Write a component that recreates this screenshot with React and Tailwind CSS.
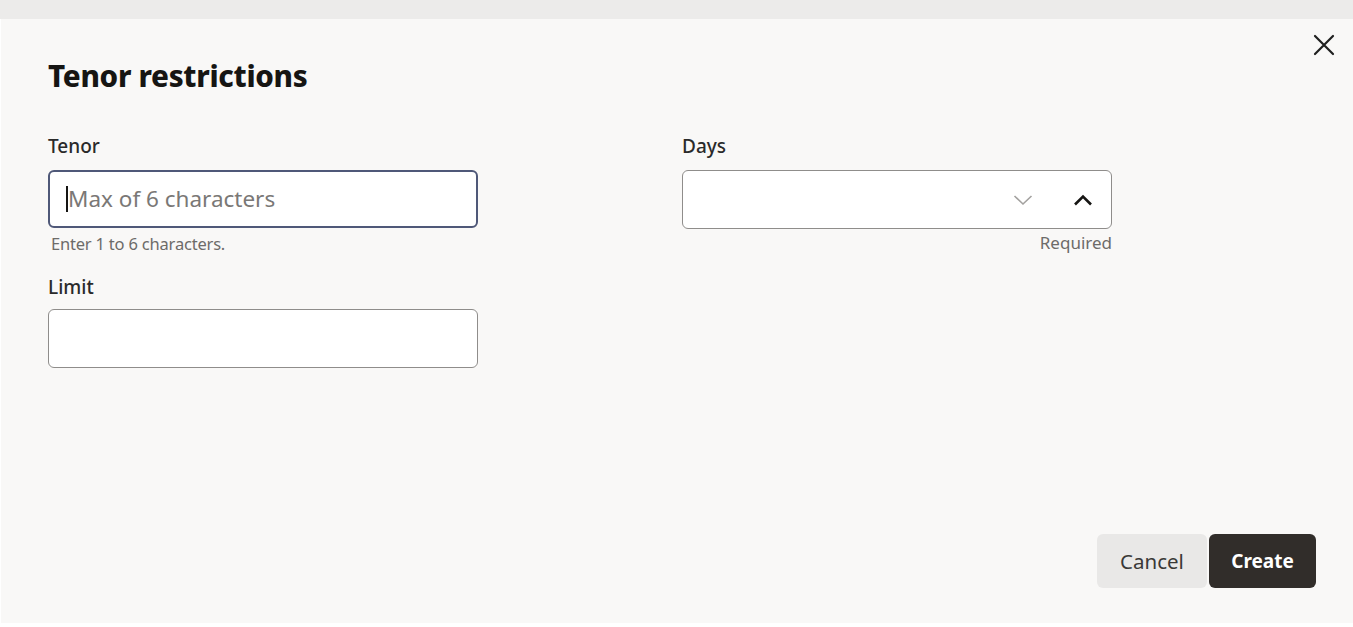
import React from "react";

export default function App() {
  return (
    <div className="w-[1353px] h-[627px] bg-white overflow-hidden" style={{ fontFamily: '"Noto Sans", "Open Sans", sans-serif' }}>
      <div className="h-[19px] bg-[#ecebea]" />
      <div className="relative h-[604px] ml-[1px] bg-[#f9f8f7] pl-[47px] pr-[37px] flex flex-col">
        <button className="absolute right-[17px] top-[14px] w-[24px] h-[24px] flex items-center justify-center text-[#1f1f1f]">
          <svg width="22" height="22" viewBox="0 0 22 22" fill="none" stroke="currentColor" strokeWidth="2.2" strokeLinecap="round">
            <path d="M2 2 L20 20 M20 2 L2 20" />
          </svg>
        </button>
        <h1 className="mt-[38px] text-[29.5px] leading-[38px] font-extrabold text-[#161513] tracking-[-0.3px]">Tenor restrictions</h1>
        <div className="mt-[39px] grid grid-cols-[430px_430px] gap-x-[204px]">
          <div className="flex flex-col">
            <label className="text-[19px] leading-[24px] font-medium text-[#2a2a2a]">Tenor</label>
            <div className="mt-[12px] h-[58px] rounded-[6px] border-2 border-[#4f5878] bg-white flex items-center pl-[16px]">
              <span className="w-[2px] h-[26px] bg-[#161513]" />
              <span className="text-[22.5px] text-[#7a7876]">Max of 6 characters</span>
            </div>
            <div className="mt-[6px] pl-[3px] text-[16.5px] leading-[20px] text-[#6d6b69] tracking-[-0.2px]">Enter 1 to 6 characters.</div>
            <label className="mt-[21px] text-[19px] leading-[24px] font-medium text-[#2a2a2a]">Limit</label>
            <div className="mt-[10px] h-[59px] rounded-[6px] border border-[#8f8d8b] bg-white" />
          </div>
          <div className="flex flex-col">
            <label className="text-[19px] leading-[24px] font-medium text-[#2a2a2a]">Days</label>
            <div className="mt-[12px] h-[59px] rounded-[6px] border border-[#8f8d8b] bg-white flex items-center justify-end pr-[18px] gap-[40px]">
              <svg width="20" height="12" viewBox="0 0 20 12" fill="none" stroke="#a3a19f" strokeWidth="1.6">
                <path d="M1.5 2 L10 10 L18.5 2" />
              </svg>
              <svg width="20" height="12" viewBox="0 0 20 12" fill="none" stroke="#161513" strokeWidth="2.6">
                <path d="M2 10.5 L10 2.5 L18 10.5" />
              </svg>
            </div>
            <div className="mt-[4px] text-right text-[17px] leading-[20px] text-[#6d6b69]">Required</div>
          </div>
        </div>
        <div className="mt-auto mb-[35px] flex justify-end gap-[2px]">
          <button className="w-[110px] h-[54px] rounded-[6px] bg-[#e9e8e7] text-[20.5px] text-[#3a3937]">Cancel</button>
          <button className="w-[107px] h-[54px] rounded-[6px] bg-[#312d2a] text-[19px] font-bold text-white">Create</button>
        </div>
      </div>
    </div>
  );
}
